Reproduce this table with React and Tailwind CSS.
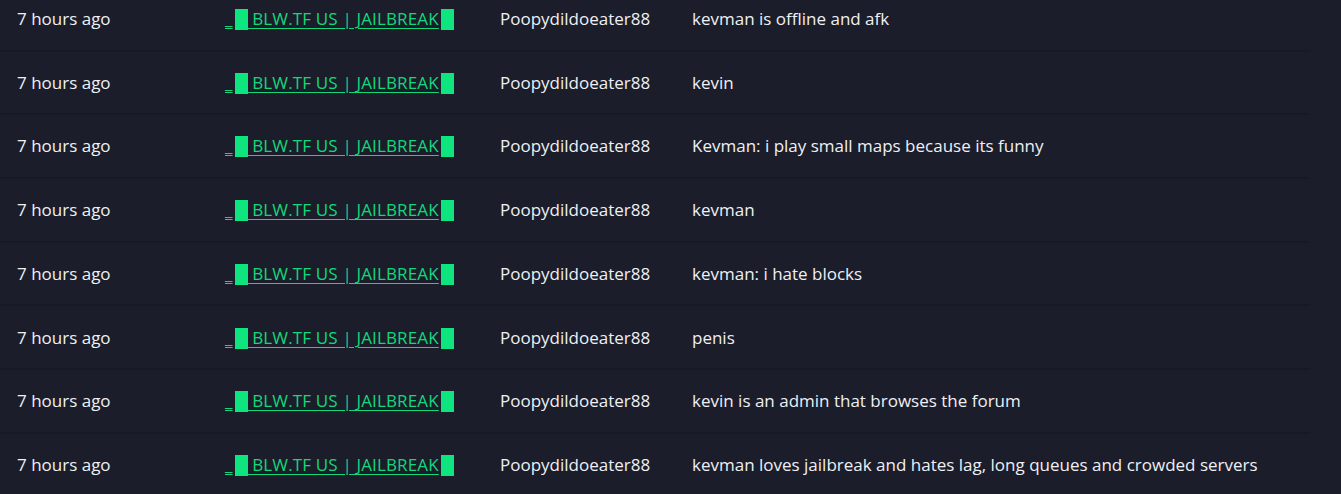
const rows = [
  "kevman is offline and afk",
  "kevin",
  "Kevman: i play small maps because its funny",
  "kevman",
  "kevman: i hate blocks",
  "penis",
  "kevin is an admin that browses the forum",
  "kevman loves jailbreak and hates lag, long queues and crowded servers",
];

function Block() {
  return <span className="ml-[2px] inline-block h-[21px] w-[13px] bg-[#0ee57f] align-[-5px]" />;
}

function ServerLink() {
  return (
    <a href="#" className="text-[#12d87a] underline underline-offset-[3px] decoration-1 tracking-[0.15px]">
      _<Block /> BLW.TF US | JAILBREAK<Block />
    </a>
  );
}

export default function App() {
  return (
    <main
      className="h-[494px] w-full overflow-hidden bg-[#1b1d2a] text-[17px] text-[#eef0f4]"
      style={{ fontFamily: '"Open Sans", sans-serif' }}
    >
      <table className="-mt-[13px] w-[1310px] table-fixed border-collapse">
        <colgroup>
          <col className="w-[209px]" />
          <col className="w-[275px]" />
          <col className="w-[192px]" />
          <col />
        </colgroup>
        <tbody>
          {rows.map((msg, i) => (
            <tr key={i} className="h-[63.7px] border-b-2 border-[#171923]">
              <td className="pl-[17px] whitespace-nowrap">7 hours ago</td>
              <td className="pl-[16px] whitespace-nowrap">
                <ServerLink />
              </td>
              <td className="pl-[16px] whitespace-nowrap">Poopydildoeater88</td>
              <td className="pl-[16px] whitespace-nowrap">{msg}</td>
            </tr>
          ))}
        </tbody>
      </table>
    </main>
  );
}
